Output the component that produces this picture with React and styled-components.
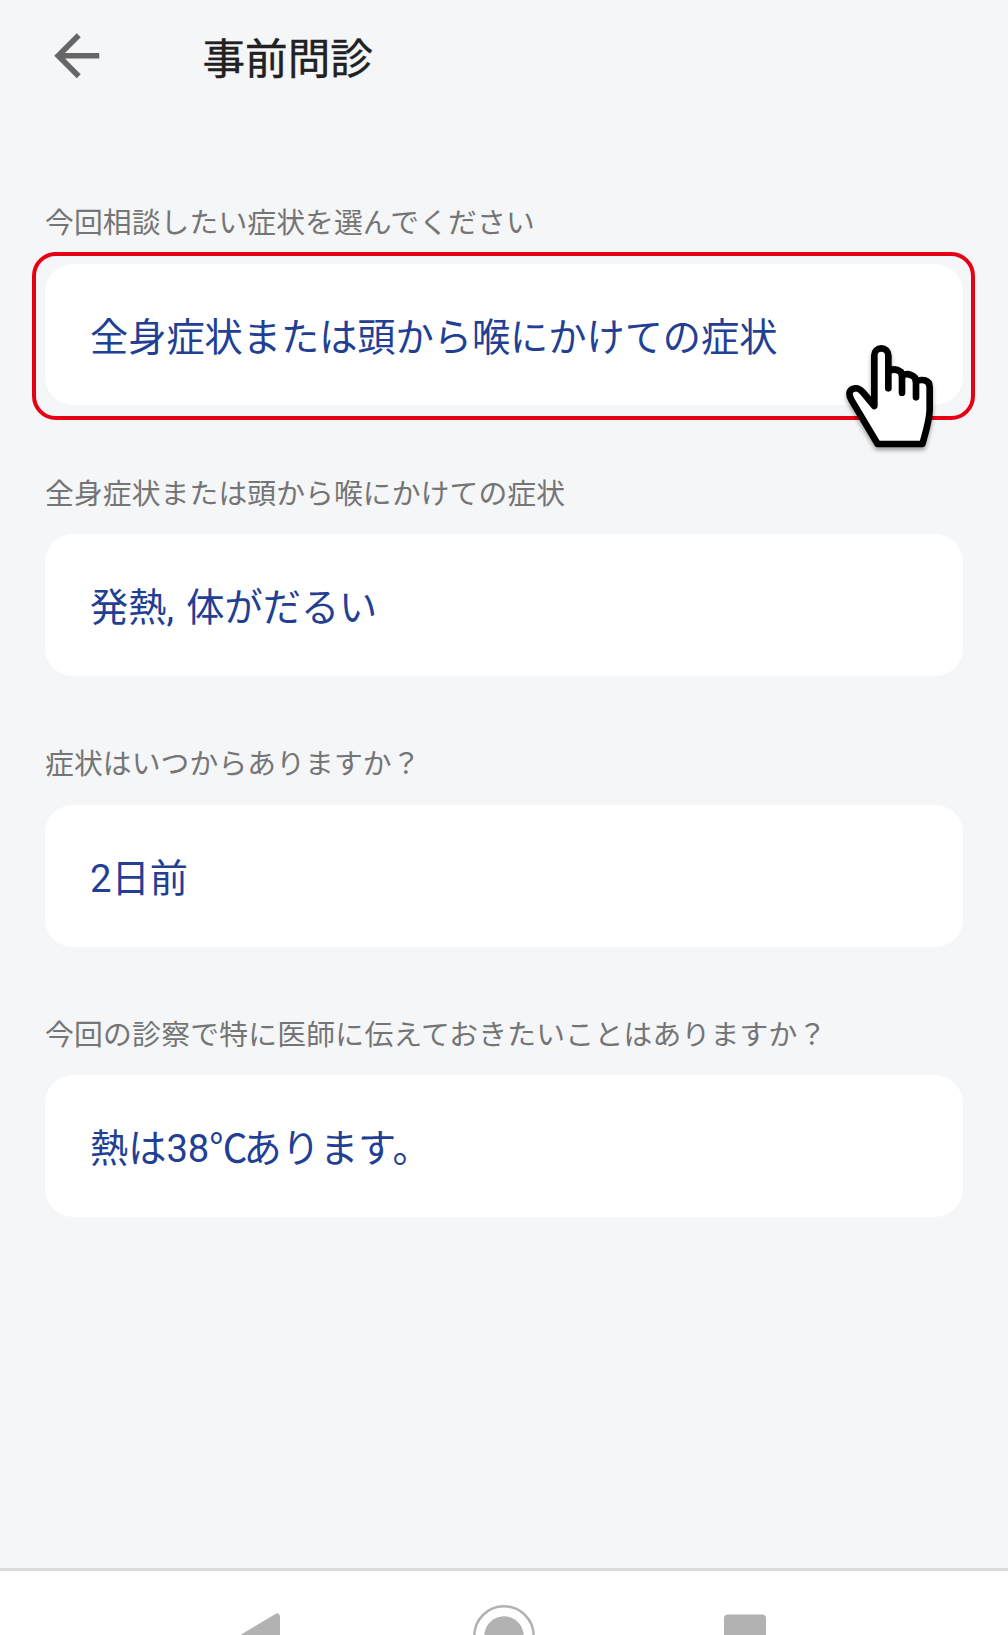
import styled, { createGlobalStyle } from 'styled-components';

const GlobalStyle = createGlobalStyle`
  body {
    margin: 0;
    background: #f4f6f8;
    font-family: Roboto, 'Noto Sans CJK JP', sans-serif;
  }
`;

const Screen = styled.div`
  display: flex;
  flex-direction: column;
  height: 1635px;
  overflow: hidden;
  background: #f4f6f8;
`;

const Header = styled.header`
  display: flex;
  align-items: center;
  gap: 92px;
  height: 111px;
  padding-left: 43px;
`;

const BackButton = styled.button`
  display: flex;
  padding: 0;
  border: none;
  background: none;
  color: #666;
`;

const Title = styled.h1`
  margin: 7px 0 0;
  color: #212121;
  font-size: 42.6px;
  font-weight: 400;
  line-height: 60px;
  -webkit-text-stroke: 0.4px #212121;
`;

const Form = styled.main`
  flex: 1;
  padding: 91px 45px 0;
`;

const Question = styled.section`
  position: relative;
  height: 270.6px;
`;

const Label = styled.div`
  height: 61.7px;
  color: #757575;
  font-size: 28.8px;
  letter-spacing: ${({ $tracking }) => $tracking || 0.1}px;
  line-height: 42px;
  white-space: nowrap;
`;

const Answer = styled.div`
  display: flex;
  align-items: center;
  box-sizing: border-box;
  height: 141.8px;
  padding: 0 45px 1px;
  border-radius: 28px;
  background: #fff;
  color: #233f94;
  font-size: 38.2px;
  word-spacing: 3px;
  white-space: pre;
`;

const Unit = styled.span`
  letter-spacing: -4px;
`;

const Highlight = styled.div`
  position: absolute;
  top: 50px;
  left: -13px;
  right: -12px;
  box-sizing: border-box;
  height: 168px;
  border: 4px solid #e60012;
  border-radius: 24px;
`;

const Cursor = styled.svg`
  position: absolute;
  top: 139px;
  left: 798px;
  filter: drop-shadow(0 3px 2px rgba(0, 0, 0, 0.35));
`;

const NavBar = styled.nav`
  display: flex;
  justify-content: center;
  box-sizing: border-box;
  height: 67px;
  border-top: 3px solid #d9dadc;
  background: #fff;
`;

const questions = [
  { label: '今回相談したい症状を選んでください', answer: '全身症状または頭から喉にかけての症状', selected: true },
  { label: '全身症状または頭から喉にかけての症状', answer: '発熱, 体がだるい' },
  { label: '症状はいつからありますか？', answer: '2日前' },
  {
    label: '今回の診察で特に医師に伝えておきたいことはありますか？',
    answer: <>熱は38<Unit>℃</Unit>あります。</>,
    tracking: 0.24,
  },
];

function HandCursor() {
  return (
    <Cursor width="94" height="114" viewBox="69 63 282 342">
      <path
        d="M163 258V106a21 21 0 0 1 42 0V154Q224 142 243 156L246 167Q266 155 285 173L288 184Q300 178 314 181Q329 185 329 202V270Q328 302 307 372H173L95 241C82 218 90 207 105 205Q116 203 128 216Z"
        fill="#fff"
        stroke="#000"
        strokeWidth="20"
        strokeLinejoin="round"
      />
      <path d="M205 152V205M246 164V218M288 182V232" stroke="#000" strokeWidth="20" strokeLinecap="round" />
    </Cursor>
  );
}

export default function App() {
  return (
    <Screen>
      <GlobalStyle />
      <Header>
        <BackButton aria-label="戻る">
          <svg width="67.5" height="67.5" viewBox="0 0 24 24" fill="currentColor">
            <path d="M20 11H7.83l5.59-5.59L12 4l-8 8 8 8 1.41-1.41L7.83 13H20v-2z" />
          </svg>
        </BackButton>
        <Title>事前問診</Title>
      </Header>
      <Form>
        {questions.map(({ label, answer, selected, tracking }) => (
          <Question key={label}>
            <Label $tracking={tracking}>{label}</Label>
            <Answer>
              <span>{answer}</span>
            </Answer>
            {selected && <Highlight />}
            {selected && <HandCursor />}
          </Question>
        ))}
      </Form>
      <NavBar>
        <svg width="1008" height="64" viewBox="0 0 1008 64" fill="#b2b2b2">
          <path d="M242 66.5L277 45.5V87L242 66.5Z" stroke="#b2b2b2" strokeWidth="6" strokeLinejoin="round" />
          <circle cx="504" cy="65" r="29.7" fill="none" stroke="#b2b2b2" strokeWidth="2.5" />
          <circle cx="504" cy="65" r="19.7" />
          <rect x="724" y="43.5" width="42" height="42" rx="4" />
        </svg>
      </NavBar>
    </Screen>
  );
}
